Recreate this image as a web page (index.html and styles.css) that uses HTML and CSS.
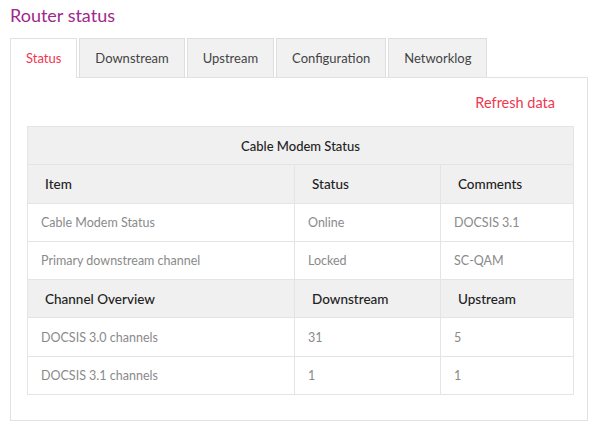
FILE: index.html
```html
<!DOCTYPE html>
<html>
<head>
<meta charset="utf-8">
<link rel="stylesheet" href="styles.css">
</head>
<body>
<h1 class="title">Router status</h1>
<div class="tabs">
  <div class="tab active">Status</div>
  <div class="tab">Downstream</div>
  <div class="tab">Upstream</div>
  <div class="tab">Configuration</div>
  <div class="tab">Networklog</div>
</div>
<div class="panel">
  <div class="refresh-row"><a class="refresh">Refresh data</a></div>
  <table class="status-table">
    <colgroup><col class="c1"><col class="c2"><col class="c3"></colgroup>
    <tr class="caption-row"><th colspan="3">Cable Modem Status</th></tr>
    <tr class="head-row"><th>Item</th><th>Status</th><th>Comments</th></tr>
    <tr><td>Cable Modem Status</td><td>Online</td><td>DOCSIS 3.1</td></tr>
    <tr><td>Primary downstream channel</td><td>Locked</td><td>SC-QAM</td></tr>
    <tr class="head-row"><th>Channel Overview</th><th>Downstream</th><th>Upstream</th></tr>
    <tr><td>DOCSIS 3.0 channels</td><td>31</td><td>5</td></tr>
    <tr><td>DOCSIS 3.1 channels</td><td>1</td><td>1</td></tr>
  </table>
</div>
</body>
</html>
```
FILE: styles.css
```css
body {
  margin: 0;
  padding: 0 12px 0 10px;
  font-family: Lato, "Open Sans", sans-serif;
  background: #fff;
}
.title {
  margin: 0;
  padding-top: 4px;
  height: 34px;
  font-size: 18px;
  font-weight: 400;
  color: #a0288c;
  line-height: 22px;
}
.tabs {
  display: flex;
  gap: 2px;
  height: 39px;
}
.tab {
  box-sizing: border-box;
  height: 39px;
  padding: 0 15px;
  line-height: 38px;
  font-size: 13px;
  color: #444;
  background: #f1f1f1;
  border: 1px solid #dedede;
  border-bottom: none;
}
.tab.active {
  background: #fff;
  color: #f0364f;
  border-color: #e2e2e2;
  height: 40px;
  position: relative;
  z-index: 1;
}
.panel {
  box-sizing: border-box;
  height: 344px;
  border: 1px solid #e2e2e2;
  padding: 0 16px 0 16px;
  margin-top: 0;
}
.refresh-row {
  display: flex;
  justify-content: flex-end;
  height: 48px;
  padding-right: 16px;
  align-items: center;
}
.refresh {
  color: #f0364f;
  font-size: 14.5px;
}
.status-table {
  width: 546px;
  border-collapse: collapse;
  table-layout: fixed;
  font-size: 12.5px;
}
.c1 { width: 267px; }
.c2 { width: 146px; }
.c3 { width: 133px; }
.status-table th, .status-table td {
  border: 1px solid #e4e4e4;
  height: 38.3px;
  box-sizing: border-box;
  text-align: left;
}
.status-table td {
  padding: 0 13px;
  color: #8a8a8a;
}
.status-table th {
  background: #f0f0f0;
  color: #222;
  font-weight: 500;
  font-size: 13.5px;
  padding: 0 17px;
}
.caption-row th {
  text-align: center;
  font-size: 13px;
}
```
